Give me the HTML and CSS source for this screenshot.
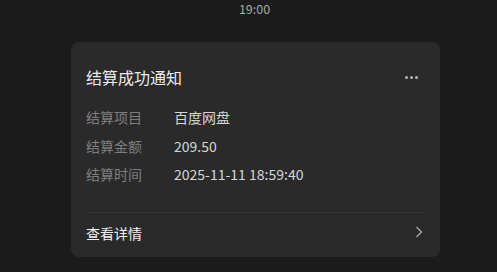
FILE: index.html
```html
<!DOCTYPE html>
<html>
<head>
    <title>结算成功通知</title>
    <meta charset="UTF-8">
    <link rel="stylesheet" href="styles.css">
</head>
<body>
    <div class="time">19:00</div>
    <div class="card">
        <div class="card-head">
            <span class="card-title">结算成功通知</span>
            <span class="more"><i></i><i></i><i></i></span>
        </div>
        <div class="rows">
            <div class="row"><span class="label">结算项目</span><span class="value">百度网盘</span></div>
            <div class="row"><span class="label">结算金额</span><span class="value">209.50</span></div>
            <div class="row"><span class="label">结算时间</span><span class="value">2025-11-11 18:59:40</span></div>
        </div>
        <div class="card-foot">
            <span>查看详情</span>
            <svg width="8" height="12" viewBox="0 0 8 12">
                <path d="M1.5 1 L6.5 6 L1.5 11" fill="none" stroke="#a8a8a8" stroke-width="1.3"/>
            </svg>
        </div>
    </div>
</body>
</html>
```

FILE: styles.css
```css
body {
    margin: 0;
    background: #1b1b1b;
    font-family: "Noto Sans CJK SC", "Noto Sans", sans-serif;
}
.time {
    text-align: center;
    font-size: 12.5px;
    line-height: 18px;
    color: #a9a9a9;
    padding-left: 12px;
}
.card {
    margin: 24px 0 0 71px;
    width: 339px;
    padding: 0 15px;
    background: #2a2a2a;
    border-radius: 8px;
}
.card-head {
    display: flex;
    align-items: center;
    justify-content: space-between;
    padding-top: 25px;
    height: 20px;
}
.card-title {
    font-size: 16px;
    line-height: 20px;
    color: #ececec;
}
.more {
    display: flex;
    gap: 2px;
    margin-right: 7px;
    margin-top: 0;
}
.more i {
    width: 3px;
    height: 3px;
    border-radius: 50%;
    background: #b5b5b5;
}
.rows {
    margin-top: 16px;
    padding-bottom: 23px;
    border-bottom: 1px solid #343434;
}
.row {
    display: flex;
    font-size: 14px;
    line-height: 28.5px;
}
.label {
    width: 88px;
    color: #7e7e7e;
}
.value {
    color: #d6d6d6;
}
.card-foot {
    display: flex;
    align-items: center;
    justify-content: space-between;
    height: 40px;
    padding-bottom: 4px;
    font-size: 14px;
    color: #f0f0f0;
}
.card-foot svg {
    margin-right: 2px;
    margin-top: -2px;
}
```
